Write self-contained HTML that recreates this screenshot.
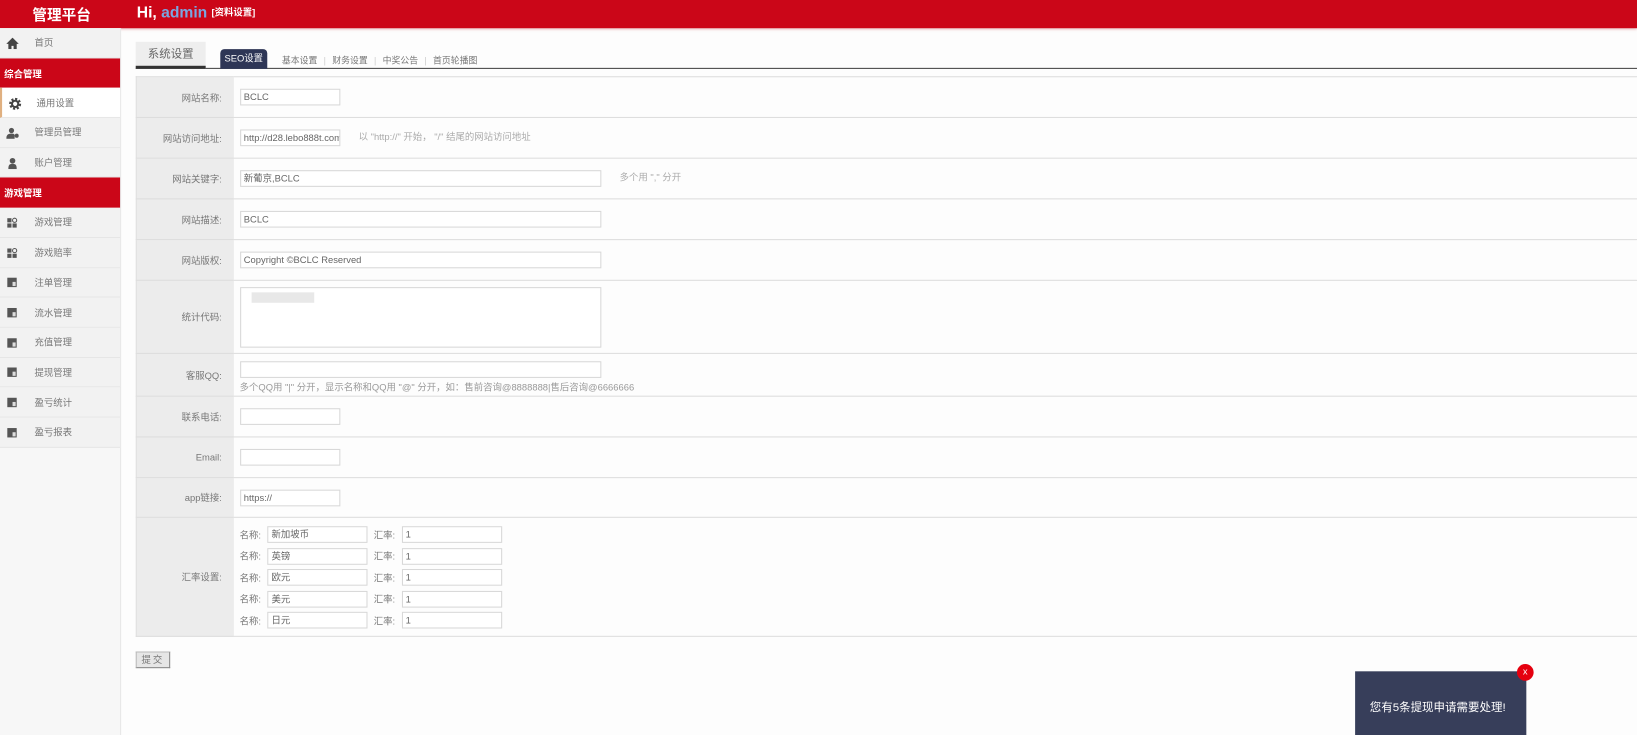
<!DOCTYPE html>
<html><head><meta charset="utf-8"><style>
*{margin:0;padding:0;box-sizing:border-box}
html,body{width:1637px;height:735px;overflow:hidden;background:#fff}
body{font-family:"Liberation Sans","Noto Sans CJK SC",sans-serif;color:#777}
#w{width:1568px;height:704px;position:relative;transform:scale(1.04400,1.04403);transform-origin:0 0;background:#fdfdfd}
.hd{position:absolute;left:0;top:0;width:1568px;height:27px;background:#cb0618;box-shadow:0 1px 3px rgba(180,0,20,.4);color:#fff}
.hd .t{position:absolute;left:31px;top:4px;font-size:14px;font-weight:bold}
.hd .hi{position:absolute;left:131px;top:4px;font-size:15px;font-weight:bold}
.hd .hi b{color:#7aa6e0}
.hd .hi span{font-size:9px;margin-left:4px;vertical-align:2px}
.sb{position:absolute;left:0;top:27px;width:116px;height:677px;background:#f7f7f7;border-right:1px solid #e8e8e8}
.it{height:28.7px;display:flex;align-items:center;font-size:9px;color:#777;border-bottom:1px solid #e6e6e6;background:#f2f2f2}
.it i{width:12px;height:10px;margin:0 15px 0 6px;display:inline-block}
.it.a{background:#fff;border-left:2px solid #e0b080}
.sec{height:28.7px;background:#cb0618;color:#fff;font-size:9px;font-weight:bold;display:flex;align-items:center;padding-left:4px}
.tabs{position:absolute;left:130px;top:40px;width:1438px;height:26px;border-bottom:1px solid #444}
.tab1{position:absolute;left:0;top:0;width:67px;height:26px;background:#eee;border-bottom:3px solid #333;font-size:11px;color:#666;text-align:center;line-height:24px}
.seo{position:absolute;left:81px;top:7px;width:45px;height:19px;background:#2e3656;color:#fff;border-radius:4px 4px 0 0;font-size:9px;text-align:center;line-height:19px}
.tl{position:absolute;left:140px;top:12px;font-size:8.5px;color:#777;white-space:nowrap}
.tl s{text-decoration:none;color:#ccc;margin:0 6px}
table{position:absolute;left:130px;top:73px;width:1438px;border-collapse:collapse}
td{border-top:1px solid #ddd;border-bottom:1px solid #ddd;font-size:9px;color:#777}
td.l{width:93px;background:#ececec;text-align:right;padding-right:11px;border-left:1px solid #ddd}
td.v{padding-left:6px}
.in{display:inline-block;height:16px;border:1px solid #d8d8d8;background:#fff;font-size:9px;line-height:14px;padding-left:3px;color:#666;vertical-align:middle;overflow:hidden;white-space:nowrap}
.s{width:96px}.wd{width:346px}
.h{color:#aaa;margin-left:18px}
.r{display:flex;align-items:center;height:20.5px}
.r .in{width:96px;height:16px;margin:0 6px 0 6px}
.btn{position:absolute;left:130px;top:624px;width:33px;height:16px;background:#e6e6e6;border:1px solid #bbb;border-bottom-color:#888;border-right-color:#888;font-size:9px;text-align:center;line-height:14px;color:#777;letter-spacing:2px}
.pop{position:absolute;left:1298px;top:643px;width:164px;height:61px;background:#373e5a;color:#fff;font-size:11px;padding:26px 0 0 14px}
.x{position:absolute;left:1453px;top:636px;width:16px;height:16px;border-radius:50%;background:#e5000f;color:#fff;font-size:9px;text-align:center;line-height:15px}
</style></head><body><div id="w">
<div class="hd"><div class="t">管理平台</div><div class="hi">Hi, <b>admin</b><span>[资料设置]</span></div></div>
<div class="sb">
<div class="it"><i><svg width="12" height="11" viewBox="0 0 12 11"><path d="M6 0L0 6h2v5h3V8h2v3h3V6h2z" fill="#444"/></svg></i>首页</div>
<div class="sec">综合管理</div>
<div class="it a"><i><svg width="13" height="13" viewBox="0 0 13 13"><circle cx="6.5" cy="6.5" r="4.5" fill="none" stroke="#444" stroke-width="2.5" stroke-dasharray="2 1.5"/><circle cx="6.5" cy="6.5" r="3" fill="none" stroke="#444" stroke-width="2"/></svg></i>通用设置</div>
<div class="it"><i><svg width="12" height="11"><circle cx="5" cy="3" r="2.5" fill="#555"/><path d="M0 11c0-4 2-5 5-5s3 1 3 2v3z" fill="#555"/><circle cx="10" cy="8" r="2" fill="#555"/></svg></i>管理员管理</div>
<div class="it"><i><svg width="12" height="11"><circle cx="6" cy="3" r="2.7" fill="#555"/><path d="M2 11c0-4 1-5 4-5s4 1 4 5z" fill="#555"/></svg></i>账户管理</div>
<div class="sec">游戏管理</div>
<div class="it"><i><svg width="12" height="11"><rect x="1" y="1" width="4" height="4" fill="#555"/><rect x="1" y="6" width="4" height="4" fill="#555"/><rect x="6" y="6" width="4" height="4" fill="#555"/><circle cx="8" cy="3" r="2" fill="none" stroke="#555"/></svg></i>游戏管理</div>
<div class="it"><i><svg width="12" height="11"><rect x="1" y="1" width="4" height="4" fill="#555"/><rect x="1" y="6" width="4" height="4" fill="#555"/><rect x="6" y="6" width="4" height="4" fill="#555"/><circle cx="8" cy="3" r="2" fill="none" stroke="#555"/></svg></i>游戏赔率</div>
<div class="it"><i><svg width="12" height="11"><rect x="1" y="1" width="9" height="9" fill="#555"/><rect x="6" y="5" width="3" height="4" fill="#ddd"/></svg></i>注单管理</div>
<div class="it"><i><svg width="12" height="11"><rect x="1" y="1" width="9" height="9" fill="#555"/><rect x="6" y="5" width="3" height="4" fill="#ddd"/></svg></i>流水管理</div>
<div class="it"><i><svg width="12" height="11"><rect x="1" y="1" width="9" height="9" fill="#555"/><rect x="6" y="5" width="3" height="4" fill="#ddd"/></svg></i>充值管理</div>
<div class="it"><i><svg width="12" height="11"><rect x="1" y="1" width="9" height="9" fill="#555"/><rect x="6" y="5" width="3" height="4" fill="#ddd"/></svg></i>提现管理</div>
<div class="it"><i><svg width="12" height="11"><rect x="1" y="1" width="9" height="9" fill="#555"/><rect x="6" y="5" width="3" height="4" fill="#ddd"/></svg></i>盈亏统计</div>
<div class="it"><i><svg width="12" height="11"><rect x="1" y="1" width="9" height="9" fill="#555"/><rect x="6" y="5" width="3" height="4" fill="#ddd"/></svg></i>盈亏报表</div>
</div>
<div class="tabs"><div class="tab1">系统设置</div><div class="seo">SEO设置</div>
<div class="tl">基本设置<s>|</s>财务设置<s>|</s>中奖公告<s>|</s>首页轮播图</div></div>
<table>
<tr style="height:39px"><td class="l">网站名称:</td><td class="v"><span class="in s">BCLC</span></td></tr>
<tr style="height:39px"><td class="l">网站访问地址:</td><td class="v"><span class="in s">http://d28.lebo888t.com</span><span class="h">以 "http://" 开始， "/" 结尾的网站访问地址</span></td></tr>
<tr style="height:39px"><td class="l">网站关键字:</td><td class="v"><span class="in wd">新葡京,BCLC</span><span class="h">多个用 "," 分开</span></td></tr>
<tr style="height:39px"><td class="l">网站描述:</td><td class="v"><span class="in wd">BCLC</span></td></tr>
<tr style="height:39px"><td class="l">网站版权:</td><td class="v"><span class="in wd">Copyright ©BCLC Reserved</span></td></tr>
<tr style="height:70px"><td class="l">统计代码:</td><td class="v"><span class="in wd" style="height:58px;position:relative"><span style="position:absolute;left:10px;top:4px;width:60px;height:10px;background:#e8e8e8"></span></span></td></tr>
<tr style="height:41px"><td class="l">客服QQ:</td><td class="v" style="padding-top:5px"><span class="in wd"></span><div style="color:#999;margin-top:2px">多个QQ用 "|" 分开，显示名称和QQ用 "@" 分开，如：售前咨询@8888888|售后咨询@6666666</div></td></tr>
<tr style="height:39px"><td class="l">联系电话:</td><td class="v"><span class="in s"></span></td></tr>
<tr style="height:39px"><td class="l">Email:</td><td class="v"><span class="in s"></span></td></tr>
<tr style="height:38px"><td class="l">app链接:</td><td class="v"><span class="in s">https://</span></td></tr>
<tr style="height:114px"><td class="l">汇率设置:</td><td class="v" style="padding-top:1px">
<div class="r">名称:<span class="in">新加坡币</span>汇率:<span class="in">1</span></div>
<div class="r">名称:<span class="in">英镑</span>汇率:<span class="in">1</span></div>
<div class="r">名称:<span class="in">欧元</span>汇率:<span class="in">1</span></div>
<div class="r">名称:<span class="in">美元</span>汇率:<span class="in">1</span></div>
<div class="r">名称:<span class="in">日元</span>汇率:<span class="in">1</span></div>
</td></tr>
</table>
<div class="btn">提交</div>
<div class="pop">您有5条提现申请需要处理!</div>
<div class="x">x</div>
</div></body></html>
